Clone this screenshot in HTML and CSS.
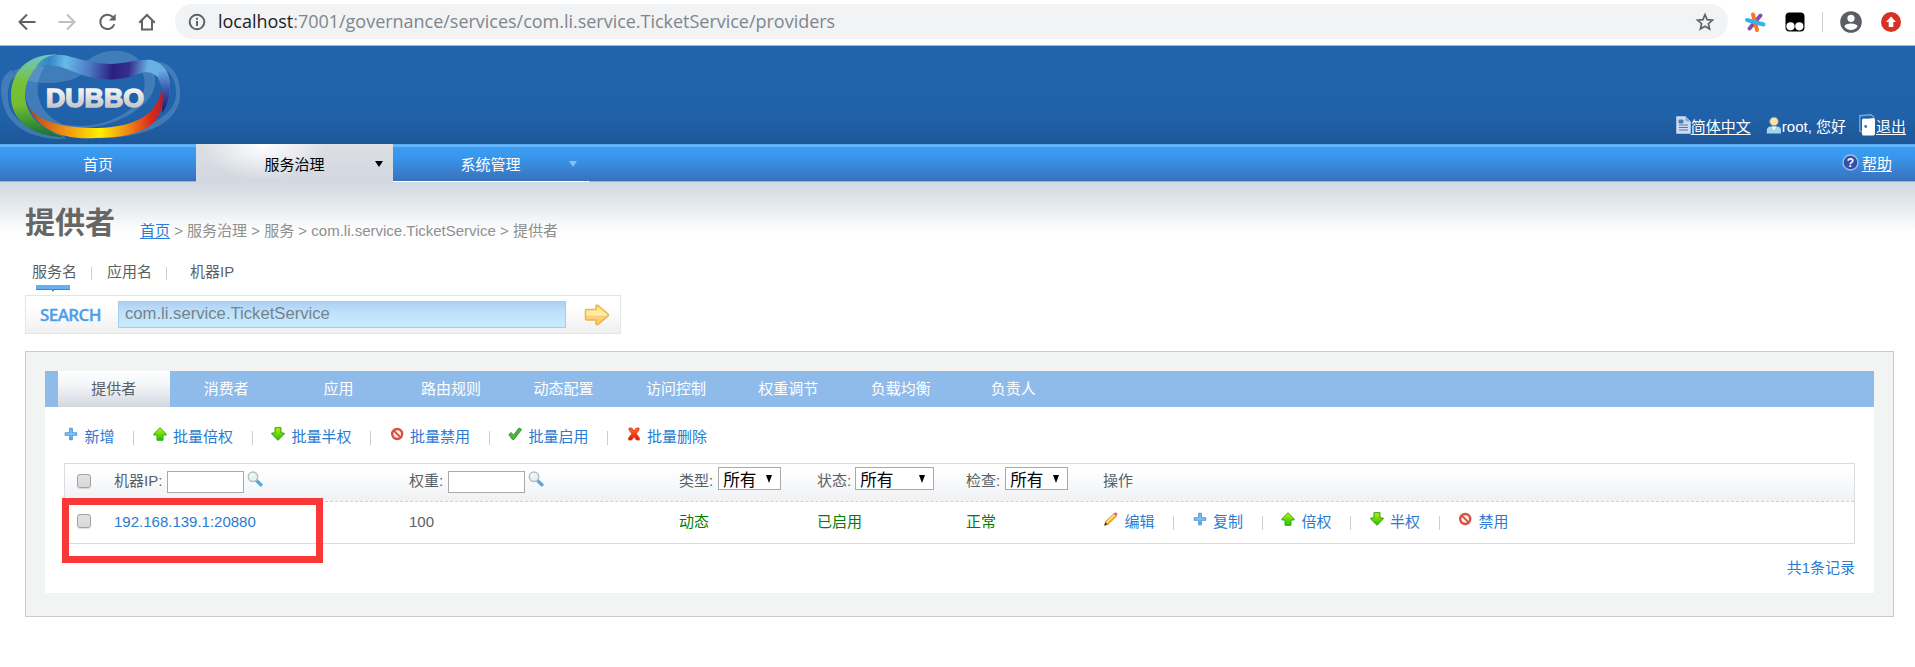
FILE: index.html
```html
<!DOCTYPE html>
<html lang="zh-CN">
<head>
<meta charset="utf-8">
<title>Dubbo</title>
<link rel="stylesheet" href="styles.css">
</head>
<body>
<svg width="0" height="0" class="defs" aria-hidden="true">
  <defs>
    <linearGradient id="gUp" x1="0" y1="0" x2="0" y2="1"><stop offset="0" stop-color="#c4f000"/><stop offset="1" stop-color="#1fbf0a"/></linearGradient>
    <linearGradient id="gPlus" x1="0" y1="0" x2="0" y2="1"><stop offset="0" stop-color="#6fb4ea"/><stop offset=".5" stop-color="#7fd0f8"/><stop offset="1" stop-color="#4f97d8"/></linearGradient>
    <linearGradient id="gGold" x1="0" y1="0" x2="0" y2="1"><stop offset="0" stop-color="#ffe46a"/><stop offset=".5" stop-color="#ffeeb0"/><stop offset=".55" stop-color="#ffcf7a"/><stop offset="1" stop-color="#ffc870"/></linearGradient>
    <linearGradient id="gRed" x1="0" y1="0" x2="0" y2="1"><stop offset="0" stop-color="#ff6a30"/><stop offset="1" stop-color="#e01800"/></linearGradient>
    <symbol id="plus" viewBox="0 0 14 14"><path d="M5.700 1.200h2.600V5.700h4.400v2.600H8.300v4.400H5.700V8.300H1.200V5.700h4.500z" fill="url(#gPlus)" stroke="#5b9bd6" stroke-width="1.100" stroke-linejoin="round"/></symbol>
    <symbol id="up" viewBox="0 0 14 14"><path d="M7 .7 13.200 7v1H10v5.300H4V8H.8V7z" fill="url(#gUp)" stroke="#2fb51a" stroke-width="1"/></symbol>
    <symbol id="down" viewBox="0 0 14 14"><path d="M7 13.300.8 7V6H4V.7h6V6h3.200v1z" fill="url(#gUp)" stroke="#2a9f1a" stroke-width="1"/></symbol>
    <symbol id="ban" viewBox="0 0 14 14"><circle cx="7.200" cy="7" r="5" fill="#fbeeee" stroke="#d9503e" stroke-width="2.400"/><path d="m3.800 3.600 6.800 6.800" stroke="#d9503e" stroke-width="2"/></symbol>
    <symbol id="check" viewBox="0 0 14 14"><path d="M.8 7.600 3.200 5.500l2.200 2.700L11 1l2.600 1.500-7.600 10-1.700-.2z" fill="#4fb43c" stroke="#2f8f28" stroke-width=".9" stroke-linejoin="round"/></symbol>
    <symbol id="cross" viewBox="0 0 14 14"><path d="M2 1h2.800L7 4 9.300 1H12v1.800L9.300 6.800l3 4V13H9.400L7 9.600 4.700 13H1.700v-2.200l3.100-4L2 2.800z" fill="url(#gRed)" stroke="#d8340e" stroke-width=".8"/></symbol>
    <symbol id="pencil" viewBox="0 0 14 14"><path d="M.6 13.400 1.600 9.500 10 1.600l2.600 2.500-8.200 8z" fill="#f3b61c" stroke="#a87a28" stroke-width=".7"/><path d="m3 10 7.500-7.200" stroke="#ffe98a" stroke-width="1.300"/><path d="m9.800 1.800 1.300-1.200c1-.6 2.700.8 2.200 1.800L12.200 3.800z" fill="#e0606a"/><path d="m.4 13.600.8-3 2.300 2z" fill="#3c2a22"/></symbol>
    <symbol id="search" viewBox="0 0 16 16"><path d="m9.600 9.600 4.300 4.200" stroke="#58a8e0" stroke-width="3.400" stroke-linecap="round"/><circle cx="6" cy="5.800" r="4.700" fill="#e6f3f3" stroke="#b4bfc4" stroke-width="1.500"/><path d="M3.500 5.300q.6-2 2.600-2.300" fill="none" stroke="#fff" stroke-width="1.200"/></symbol>
  </defs>
</svg>

<div class="browser">
  <div class="browser-nav">
    <svg width="20" height="20" viewBox="0 0 20 20" class="stroke"><path d="M18.500 10H3M10 2.500 2.500 10l7.500 7.500"/></svg>
    <svg width="20" height="20" viewBox="0 0 20 20" class="stroke faded"><path d="M1.500 10H17M10 2.500l7.500 7.500-7.500 7.500"/></svg>
    <svg width="20" height="20" viewBox="0 0 20 20" class="stroke"><path d="M17.300 12.200A7.200 7.200 0 1 1 15.800 5"/><path d="M18.700 1.800v6.800h-6.800z" class="solid"/></svg>
    <svg width="20" height="20" viewBox="0 0 20 20" class="stroke"><path d="M5 8.500v9h10v-9M2.200 10.800 10 3l7.800 7.800"/></svg>
  </div>
  <div class="omnibox">
    <svg width="18" height="18" viewBox="0 0 18 18" class="stroke"><circle cx="9" cy="9" r="7.300"/><path d="M9 8v5M9 4.800v2"/></svg>
    <span class="url"><b>localhost</b>:7001/governance/services/com.li.service.TicketService/providers</span>
    <svg width="20" height="20" viewBox="0 0 20 20" class="star"><path d="m10 2.600 2.100 5 5.400.5-4.100 3.600 1.200 5.300-4.600-2.800L5.400 17l1.200-5.300L2.500 8.100l5.400-.5z"/></svg>
  </div>
  <svg class="ext" width="22" height="22" viewBox="0 0 22 22" fill="none" stroke-width="4" stroke-linecap="round"><path d="m16.500 4.500-11 13" stroke="#8a4aa8"/><path d="m9 3.500 4 15.500" stroke="#ff7425"/><path d="m3 9 16.500 4.500" stroke="#2fb4ec"/></svg>
  <svg class="monkey" width="20" height="20" viewBox="0 0 20 20"><rect x=".5" y=".5" width="19" height="19" rx="4"/><circle cx="5.500" cy="14.300" r="4.100" fill="#fff"/><circle cx="14.300" cy="14.300" r="4.100" fill="#fff"/></svg>
  <i class="bar-sep"></i>
  <svg class="profile" width="22" height="22" viewBox="0 0 22 22"><circle cx="11" cy="11" r="10.800" fill="#5a5e63"/><circle cx="11" cy="7.300" r="3.600" fill="#fff"/><path d="M4.400 15.200c1.200-3.700 12-3.700 13.200 0-2.800 5.100-10.400 5.100-13.200 0z" fill="#fff"/></svg>
  <svg class="update" width="20" height="20" viewBox="0 0 20 20"><circle cx="10" cy="10" r="10" fill="#d93025"/><path d="m10 4.500 5 5.500h-2.700v5H7.700v-5H5z" fill="#fff"/></svg>
</div>

<header class="header">
  <svg class="logo" width="184" height="98" viewBox="0 0 184 98">
    <defs>
      <linearGradient id="lTop" x1="38" y1="0" x2="170" y2="16" gradientUnits="userSpaceOnUse"><stop offset="0" stop-color="#3aa5ae"/><stop offset=".1" stop-color="#3486c8"/><stop offset=".22" stop-color="#68bae8"/><stop offset=".4" stop-color="#4d7cc6"/><stop offset=".58" stop-color="#2b1f7e"/><stop offset=".7" stop-color="#35308e"/><stop offset=".84" stop-color="#69b0e4"/><stop offset="1" stop-color="#6ab0e4"/></linearGradient>
      <linearGradient id="lGreen" x1="0" y1="10" x2="0" y2="92" gradientUnits="userSpaceOnUse"><stop offset="0" stop-color="#72c4c8"/><stop offset=".32" stop-color="#76c235"/><stop offset=".6" stop-color="#73bd31"/><stop offset="1" stop-color="#0d6e35"/></linearGradient>
      <linearGradient id="lFire" x1="30" y1="0" x2="165" y2="0" gradientUnits="userSpaceOnUse"><stop offset="0" stop-color="#b84520"/><stop offset=".25" stop-color="#ef8d15"/><stop offset=".52" stop-color="#fff000"/><stop offset=".72" stop-color="#f08a14"/><stop offset=".9" stop-color="#d8291e"/><stop offset="1" stop-color="#a82030"/></linearGradient>
      <linearGradient id="lRight" x1="0" y1="24" x2="0" y2="64" gradientUnits="userSpaceOnUse"><stop offset="0" stop-color="#69ace3"/><stop offset=".45" stop-color="#3d5db4"/><stop offset="1" stop-color="#251868"/></linearGradient>
      <linearGradient id="lText" x1="0" y1="42" x2="0" y2="62" gradientUnits="userSpaceOnUse"><stop offset="0" stop-color="#f8f8f8"/><stop offset="1" stop-color="#c4c4c8"/></linearGradient>
    </defs>
    <g class="halo">
      <path d="M12 24C-2 30-1 50 6 66c10 20 34 28 60 27l-4-6C34 86 14 76 9 60c-3-14 0-28 8-30z"/>
      <path d="M14 24c30-8 58-2 74-10 12-10 36-14 50-1l4 5c-22-2-50 4-66 14-20 8-46 6-60-2z"/>
      <path d="M150 16c20-4 32 14 30 36-4 26-34 38-72 40l30-9c22-8 37-18 38-34 1-16-8-27-20-29z"/>
      <path fill-rule="evenodd" d="M40 14C20 30 18 60 46 80c34 8 76 0 100-24 14-14 10-34 2-38l-8 4c8 14 6 28-8 40-22 18-50 20-70 16C36 66 32 40 44 22z"/>
    </g>
    <path d="M56 8.500C28 8 11 25 11 50c0 26 22 40 54 41.500C42 84 26 70 25 50c0-18 10-33 31-41z" fill="url(#lGreen)"/>
    <path d="M36 21C42 10 54 7 66 9.500c18 5 28 8 46 8.500 16-1 28-5 40-4 11 3 18 13 18 27 0 9-2 17-7 24 1-10 1-18-1-27-3-8-9-12-18-12-9 3-19 7.500-34 7.500-20 0-32-6.500-46-11.500-10-3-19-3-28-1z" fill="url(#lTop)"/>
    <path d="M160 18c8 6 10 14 10 23 0 9-2 18-8 26 1-14 1-26-4-34z" fill="url(#lRight)"/>
    <path d="M29 61.500C40 76 62 82 97 82c37-1 60-12 65-40 6 34-17 50-66 50C62 94 38 84 29 61.500z" fill="url(#lFire)"/>
    <text x="46" y="60.500" class="logo-text" textLength="98" lengthAdjust="spacingAndGlyphs" fill="url(#lText)" stroke="url(#lText)">DUBBO</text>
  </svg>
  <div class="user-links">
    <a><svg width="15" height="18" viewBox="0 0 15 18"><path d="M.5.5h9l5 5v12H.5z" fill="#cfdcf0" stroke="#9fbbe0"/><path d="M9.500.5v5h5" fill="#86a8d8"/><path d="M3 4h4v3H3zM3 9h9M3 11.500h9M3 14h9" stroke="#507ab4" fill="#507ab4"/></svg><u>简体中文</u></a>
    <span class="hello"><svg width="16" height="18" viewBox="0 0 16 18"><path d="M.8 17.500V14q.4-3.500 4-3.500h6q4 0 4.200 3.500v3.500z" fill="#a5d5ee"/><path d="m5.500 10.500 2.500 4 2.300-4z" fill="#f4fafc"/><circle cx="8" cy="5.500" r="4.300" fill="#f7e3b4" stroke="#9a927e" stroke-width=".9"/></svg>root, 您好</span>
    <a><svg width="17" height="22" viewBox="0 0 17 22"><path d="m3.500 18-2.700-1V1.700L12 .8l3.500 2.700" fill="none" stroke="#72a8e0" stroke-width="1.400"/><path d="M3 6q0-1.500 1.500-1.500 5 .5 10-.5 1.500 0 1.500 1.500v14q0 2-1.500 2h-10Q3 21.500 3 20z" fill="#fff"/><circle cx="6.700" cy="12.500" r="1.400" fill="#3f72b4"/></svg><u>退出</u></a>
  </div>
</header>

<nav class="nav">
  <div class="nav-item"><span>首页</span></div>
  <div class="nav-item active"><span>服务治理</span><i class="caret"></i></div>
  <div class="nav-item sub"><span>系统管理</span><i class="caret"></i></div>
  <a class="help"><svg width="17" height="17" viewBox="0 0 17 17"><circle cx="8.500" cy="8.500" r="7.500" fill="#304fae" stroke="#a7b8dd" stroke-width="1.400"/><text x="8.500" y="13" text-anchor="middle" class="qmark">?</text></svg><u>帮助</u></a>
</nav>

<main class="main">
  <div class="title-row">
    <h1>提供者</h1>
    <div class="crumbs"><a>首页</a> &gt; 服务治理 &gt; 服务 &gt; com.li.service.TicketService &gt; 提供者</div>
  </div>
  <div class="search-tabs"><span class="on">服务名</span><i></i><span>应用名</span><i></i><span class="ip">机器IP</span></div>
  <div class="search-box">
    <strong>SEARCH</strong>
    <div class="search-input">com.li.service.TicketService</div>
    <svg width="26" height="22" viewBox="0 0 26 22"><path d="M1.500 6.500q0-1 1-1H12V2q.4-1.400 1.800-.6L24 10q.8 1 0 2L13.800 20.500q-1.400.8-1.800-.6V16H2.500q-1 0-1-1z" fill="url(#gGold)" stroke="#e6b84e" stroke-width="1.600"/></svg>
  </div>

  <section class="panel">
    <div class="tabs"><span class="on">提供者</span><span>消费者</span><span>应用</span><span>路由规则</span><span>动态配置</span><span>访问控制</span><span>权重调节</span><span>负载均衡</span><span>负责人</span></div>
    <div class="panel-body">
      <div class="actions">
        <a><svg><use href="#plus"/></svg>新增</a><i></i>
        <a><svg><use href="#up"/></svg>批量倍权</a><i></i>
        <a><svg><use href="#down"/></svg>批量半权</a><i></i>
        <a><svg><use href="#ban"/></svg>批量禁用</a><i></i>
        <a><svg><use href="#check"/></svg>批量启用</a><i></i>
        <a><svg><use href="#cross"/></svg>批量删除</a>
      </div>
      <div class="table">
        <div class="row head">
          <div class="check"><i class="box"></i></div>
          <div class="cell">机器IP:<i class="field"></i><svg class="mag"><use href="#search"/></svg></div>
          <div class="cell">权重:<i class="field"></i><svg class="mag"><use href="#search"/></svg></div>
          <div class="cell">类型:<span class="select">所有<i></i></span></div>
          <div class="cell">状态:<span class="select wide">所有<i></i></span></div>
          <div class="cell">检查:<span class="select">所有<i></i></span></div>
          <div class="cell">操作</div>
        </div>
        <div class="row data">
          <div class="check"><i class="box"></i></div>
          <div class="cell link">192.168.139.1:20880</div>
          <div class="cell">100</div>
          <div class="cell ok">动态</div>
          <div class="cell ok">已启用</div>
          <div class="cell ok">正常</div>
          <div class="cell actions ops">
            <a><svg><use href="#pencil"/></svg>编辑</a><i></i>
            <a><svg><use href="#plus"/></svg>复制</a><i></i>
            <a><svg><use href="#up"/></svg>倍权</a><i></i>
            <a><svg><use href="#down"/></svg>半权</a><i></i>
            <a><svg><use href="#ban"/></svg>禁用</a>
          </div>
        </div>
        <div class="marker"></div>
      </div>
      <div class="total">共1条记录</div>
    </div>
  </section>
</main>
</body>
</html>
```

FILE: styles.css
```css
* { box-sizing: border-box; }
body {
  margin: 0;
  height: 667px;
  overflow: hidden;
  background: #fff;
  color: #5a5f66;
  font: 15px/20px "Liberation Sans", "Noto Sans CJK SC", sans-serif;
}
svg { display: block; flex: none; }
.defs { position: absolute; }

/* browser toolbar */
.browser {
  display: flex;
  align-items: center;
  height: 46px;
  padding: 0 14px 2px 17px;
  border-bottom: 1px solid #b5b5b8;
}
.browser-nav { display: flex; gap: 20px; width: 158px; }
.stroke { fill: none; stroke: #5f6368; stroke-width: 2; }
.stroke .solid { fill: #5f6368; stroke: none; }
.faded { stroke: #bdc0c3; }
.omnibox {
  display: flex;
  align-items: center;
  width: 1553px;
  height: 35px;
  padding: 0 13px;
  border-radius: 18px;
  background: #f1f3f4;
}
.url {
  flex: 1;
  margin: -2px 0 0 12px;
  color: #80868b;
  font: 18px/30px "Open Sans", "Noto Sans", sans-serif;
  letter-spacing: -0.020px;
  white-space: nowrap;
}
.url b { color: #202124; font-weight: 400; }
.star { fill: none; stroke: #5f6368; stroke-width: 1.700; }
.ext { margin-left: 16px; }
.monkey { margin-left: 19px; }
.bar-sep { width: 1px; height: 20px; margin: 0 17px 0 17px; background: #cdd0d3; }
.update { margin-left: 19px; }

/* header */
.header {
  display: flex;
  justify-content: space-between;
  height: 98px;
  background: linear-gradient(#2164ad, #2062aa 70%, #1d5797);
  color: #fff;
}
.halo { fill: #8fb8dc; fill-opacity: .3; }
.logo-text { font: bold 25px "Liberation Sans", sans-serif; stroke-width: 1.400; }
.user-links { display: flex; align-items: center; height: 22px; margin: 70px 9px 0 0; }
.user-links a, .hello { display: flex; align-items: center; }
.hello { margin: 0 13px 0 15px; }
.user-links svg { margin-top: -4px; }
.user-links u, .help u { text-underline-offset: 2px; }

/* navigation */
.nav {
  display: flex;
  height: 38px;
  background: linear-gradient(#5cadf7 0 1px, #68b6fa 1px 3px, #3b9df2 3px, #3898ee 12px, #3a70bb 37px, #9db4d8 37px);
  color: #fff;
}
.nav-item { display: flex; align-items: center; justify-content: center; position: relative; width: 196px; padding-top: 4px; }
.nav-item.active {
  width: 197px;
  background: radial-gradient(ellipse 62px 36px at 68px 0, #fff, #fff0), linear-gradient(#dcdfe4, #d2d8e1);
  color: #000;
}
.nav-item.sub { padding: 5px 1px 0 0; border-bottom: 1px solid #fff; }
.caret { position: absolute; right: 10px; top: 17px; border: 4px solid transparent; border-top: 6px solid #000; border-bottom: 0; }
.sub .caret { right: 12px; border-top-color: #86bff4; }
.help { display: flex; align-items: center; gap: 3px; margin-left: auto; padding: 2px 23px 0 0; }
.help svg { margin-top: -3px; }
.qmark { fill: #fff; font: bold 12px "Liberation Sans", sans-serif; }

/* page */
.main { padding: 23px 21px 0 25px; background: linear-gradient(#d2d8e2, #e4e8eb 22px, #fdfdfd 48px, #fff 60px); }
.title-row { display: flex; align-items: center; height: 36px; }
h1 { width: 115px; margin: 0; color: #666; font-size: 30px; line-height: 36px; }
.crumbs { padding-top: 15px; color: #8f8f8f; white-space: nowrap; }
.crumbs a { color: #2b7bd8; text-decoration: underline; text-underline-offset: 2px; }
.search-tabs { display: flex; height: 33px; margin-top: 21px; padding-left: 7px; }
.search-tabs i { width: 1px; height: 13px; margin: 5px 15px 0 14px; background: #d5cccb; }
.search-tabs .ip { margin-left: 8px; }
.search-tabs .on { position: relative; }
.search-tabs .on::before { content: ""; position: absolute; left: 4px; top: 23px; width: 34px; height: 4px; background: #62b1f6; border-bottom: 1px solid #3f86c8; }
.search-tabs .on::after { content: ""; position: absolute; left: 19px; top: 27px; border: 2px solid transparent; border-top: 3px solid #3f86c8; border-bottom: 0; }
.search-box {
  display: flex;
  align-items: center;
  width: 596px;
  height: 39px;
  padding-left: 14px;
  border: 1px solid #e5e5e6;
  background: linear-gradient(#fff 30%, #f0f0f1);
}
.search-box strong { width: 78px; color: #4c9eec; font: 600 17px/20px "Open Sans", sans-serif; letter-spacing: -0.6px; -webkit-text-stroke: .3px #4c9eec; }
.search-input {
  width: 448px;
  height: 27px;
  margin-right: 18px;
  padding-left: 6px;
  border: 1px solid #a9cce2;
  background: linear-gradient(#add1f3, #c0e2fa 45%, #c9ecfd);
  color: #75828e;
  font-size: 16.670px;
  line-height: 23px;
}

.panel { width: 1869px; height: 266px; margin-top: 17px; padding: 19px; border: 1px solid #c9cccb; background: #f2f4f3; }
.tabs { display: flex; height: 36px; padding-left: 13px; background: #8fbbeb; color: #fff; line-height: 36px; }
.tabs span { width: 112.450px; padding-right: 1px; text-align: center; }
.tabs .on { background: linear-gradient(#fff, #f3f5f7 40%, #d3d8e0); color: #5a5f66; }
.panel-body { height: 186px; padding: 20px 19px 0; background: #fff; }
.actions { display: flex; height: 20px; }
.actions a { display: flex; gap: 6.500px; color: #2b7bd2; white-space: nowrap; }
.actions svg { width: 14px; height: 14px; }
.actions i { width: 1px; height: 14px; margin: 4px 18.500px 0; background: #ccced3; }
.table { position: relative; width: 1791px; height: 81px; margin-top: 16px; border: 1px solid #dcdcdc; }
.row { display: grid; grid-template-columns: 49px 295px 270px 138px 149px 137px 1fr; }
.head { height: 38px; border-bottom: 1px dashed #d0d0d0; background: linear-gradient(#fff 15%, #eff1f4); }
.data { height: 41px; }
.check { padding: 10px 0 0 12px; }
.data .check { padding-top: 12px; }
.box { display: block; width: 14px; height: 14px; border: 1px solid #a4a4a4; border-radius: 3px; background: linear-gradient(#e2e2e2, #d8d8d8); box-shadow: 0 1px 1px #0002; }
.cell { display: flex; padding-top: 7px; white-space: nowrap; }
.data .cell { padding-top: 10px; }
.field { width: 77px; height: 22px; margin: 0 3px 0 5px; background: #fff; border: 1px solid #a9a9a9; }
.mag { width: 16px; height: 16px; }
.select {
  display: flex;
  justify-content: space-between;
  width: 63px;
  height: 23px;
  margin: -4px 0 0 5px;
  padding: 0 8px 0 4px;
  border: 1px solid #a9a9a9;
  background: #fff;
  color: #000;
  font-size: 16.670px;
  line-height: 26px;
}
.select.wide { width: 79px; margin-left: 4px; }
.select i { margin-top: 7px; height: 0; border: 3.500px solid transparent; border-top: 8px solid #000; border-bottom: 0; }
.link { color: #2b7bd2; }
.ok { color: #008000; }
.data .ops { height: auto; padding-left: 1px; }
.marker { position: absolute; left: -3px; top: 34px; width: 261px; height: 65px; border: 7px solid #fb3838; }
.total { margin-top: 14px; color: #2b7bd2; text-align: right; }
```
